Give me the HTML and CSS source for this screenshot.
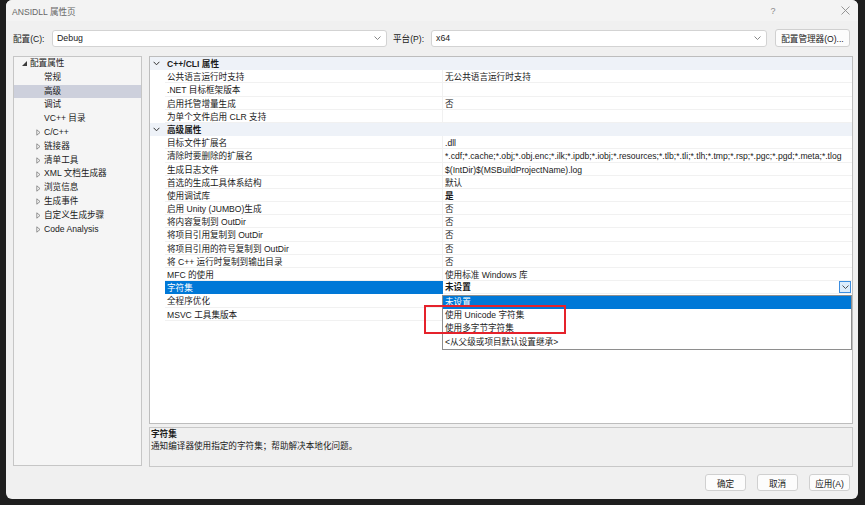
FILE: index.html
```html
<!DOCTYPE html>
<html lang="zh-CN">
<head>
<meta charset="utf-8">
<title>ANSIDLL 属性页</title>
<link rel="stylesheet" href="styles.css">
</head>
<body>
<div class="window">
  <div class="titlebar">
    <span class="title">ANSIDLL 属性页</span>
    <span class="tb-btn help">?</span>
    <span class="tb-btn close"><svg width="9" height="9" viewBox="0 0 9 9"><path d="M0.5 0.5L8.5 8.5M8.5 0.5L0.5 8.5" stroke="#8a8a8a" stroke-width="0.9" fill="none"/></svg></span>
  </div>

  <div class="configrow">
    <span class="lbl lbl-config">配置(C):</span>
    <div class="combo combo-config"><span>Debug</span><svg width="7" height="4" viewBox="0 0 7 4"><path d="M0.5 0.5L3.5 3.5L6.5 0.5" stroke="#7a7a7a" stroke-width="0.9" fill="none"/></svg></div>
    <span class="lbl lbl-platform">平台(P):</span>
    <div class="combo combo-platform"><span>x64</span><svg width="7" height="4" viewBox="0 0 7 4"><path d="M0.5 0.5L3.5 3.5L6.5 0.5" stroke="#7a7a7a" stroke-width="0.9" fill="none"/></svg></div>
    <button class="btn btn-mgr">配置管理器(O)...</button>
  </div>

  <div class="main">
    <div class="tree">
      <div class="tree-inner">
        <div class="ti l0"><span class="exp"><svg width="5" height="5" viewBox="0 0 5 5"><path d="M5 0L5 5L0 5Z" fill="#3c3c3c"/></svg></span>配置属性</div>
        <div class="ti l1"><span class="exp"></span>常规</div>
        <div class="ti l1 sel"><span class="exp"></span>高级</div>
        <div class="ti l1"><span class="exp"></span>调试</div>
        <div class="ti l1"><span class="exp"></span>VC++ 目录</div>
        <div class="ti l1"><span class="exp"><svg class="col" width="5" height="7" viewBox="0 0 5 7"><path d="M0.8 0.8L4 3.5L0.8 6.2Z" stroke="#7a7a7a" stroke-width="0.8" fill="none"/></svg></span>C/C++</div>
        <div class="ti l1"><span class="exp"><svg class="col" width="5" height="7" viewBox="0 0 5 7"><path d="M0.8 0.8L4 3.5L0.8 6.2Z" stroke="#7a7a7a" stroke-width="0.8" fill="none"/></svg></span>链接器</div>
        <div class="ti l1"><span class="exp"><svg class="col" width="5" height="7" viewBox="0 0 5 7"><path d="M0.8 0.8L4 3.5L0.8 6.2Z" stroke="#7a7a7a" stroke-width="0.8" fill="none"/></svg></span>清单工具</div>
        <div class="ti l1"><span class="exp"><svg class="col" width="5" height="7" viewBox="0 0 5 7"><path d="M0.8 0.8L4 3.5L0.8 6.2Z" stroke="#7a7a7a" stroke-width="0.8" fill="none"/></svg></span>XML 文档生成器</div>
        <div class="ti l1"><span class="exp"><svg class="col" width="5" height="7" viewBox="0 0 5 7"><path d="M0.8 0.8L4 3.5L0.8 6.2Z" stroke="#7a7a7a" stroke-width="0.8" fill="none"/></svg></span>浏览信息</div>
        <div class="ti l1"><span class="exp"><svg class="col" width="5" height="7" viewBox="0 0 5 7"><path d="M0.8 0.8L4 3.5L0.8 6.2Z" stroke="#7a7a7a" stroke-width="0.8" fill="none"/></svg></span>生成事件</div>
        <div class="ti l1"><span class="exp"><svg class="col" width="5" height="7" viewBox="0 0 5 7"><path d="M0.8 0.8L4 3.5L0.8 6.2Z" stroke="#7a7a7a" stroke-width="0.8" fill="none"/></svg></span>自定义生成步骤</div>
        <div class="ti l1"><span class="exp"><svg class="col" width="5" height="7" viewBox="0 0 5 7"><path d="M0.8 0.8L4 3.5L0.8 6.2Z" stroke="#7a7a7a" stroke-width="0.8" fill="none"/></svg></span>Code Analysis</div>
      </div>
    </div>

    <div class="right">
      <div class="grid">
        <div class="row cat"><span class="ind"><svg width="7" height="5" viewBox="0 0 7 5"><path d="M0.6 0.8L3.5 3.8L6.4 0.8" stroke="#333" stroke-width="1" fill="none"/></svg></span><span class="catname">C++/CLI 属性</span></div>
        <div class="row"><span class="ind"></span><span class="name">公共语言运行时支持</span><span class="val">无公共语言运行时支持</span></div>
        <div class="row"><span class="ind"></span><span class="name">.NET 目标框架版本</span><span class="val"></span></div>
        <div class="row"><span class="ind"></span><span class="name">启用托管增量生成</span><span class="val">否</span></div>
        <div class="row"><span class="ind"></span><span class="name">为单个文件启用 CLR 支持</span><span class="val"></span></div>
        <div class="row cat"><span class="ind"><svg width="7" height="5" viewBox="0 0 7 5"><path d="M0.6 0.8L3.5 3.8L6.4 0.8" stroke="#333" stroke-width="1" fill="none"/></svg></span><span class="catname">高级属性</span></div>
        <div class="row"><span class="ind"></span><span class="name">目标文件扩展名</span><span class="val">.dll</span></div>
        <div class="row"><span class="ind"></span><span class="name">清除时要删除的扩展名</span><span class="val">*.cdf;*.cache;*.obj;*.obj.enc;*.ilk;*.ipdb;*.iobj;*.resources;*.tlb;*.tli;*.tlh;*.tmp;*.rsp;*.pgc;*.pgd;*.meta;*.tlog</span></div>
        <div class="row"><span class="ind"></span><span class="name">生成日志文件</span><span class="val">$(IntDir)$(MSBuildProjectName).log</span></div>
        <div class="row"><span class="ind"></span><span class="name">首选的生成工具体系结构</span><span class="val">默认</span></div>
        <div class="row"><span class="ind"></span><span class="name">使用调试库</span><span class="val bold">是</span></div>
        <div class="row"><span class="ind"></span><span class="name">启用 Unity (JUMBO)生成</span><span class="val">否</span></div>
        <div class="row"><span class="ind"></span><span class="name">将内容复制到 OutDir</span><span class="val">否</span></div>
        <div class="row"><span class="ind"></span><span class="name">将项目引用复制到 OutDir</span><span class="val">否</span></div>
        <div class="row"><span class="ind"></span><span class="name">将项目引用的符号复制到 OutDir</span><span class="val">否</span></div>
        <div class="row"><span class="ind"></span><span class="name">将 C++ 运行时复制到输出目录</span><span class="val">否</span></div>
        <div class="row"><span class="ind"></span><span class="name">MFC 的使用</span><span class="val">使用标准 Windows 库</span></div>
        <div class="row selrow"><span class="ind"></span><span class="name">字符集</span><span class="val bold editval"><span>未设置</span><span class="ddbtn"><svg width="7" height="4" viewBox="0 0 7 4"><path d="M0.5 0.5L3.5 3.5L6.5 0.5" stroke="#404040" stroke-width="0.9" fill="none"/></svg></span></span></div>
        <div class="row"><span class="ind"></span><span class="name">全程序优化</span><span class="val"></span></div>
        <div class="row"><span class="ind"></span><span class="name">MSVC 工具集版本</span><span class="val"></span></div>

        <div class="ddlist">
          <div class="dditem hi">未设置</div>
          <div class="dditem">使用 Unicode 字符集</div>
          <div class="dditem">使用多字节字符集</div>
          <div class="dditem">&lt;从父级或项目默认设置继承&gt;</div>
        </div>
        <div class="redbox"></div>
      </div>
      <div class="desc">
        <div class="desc-title">字符集</div>
        <div class="desc-text">通知编译器使用指定的字符集；帮助解决本地化问题。</div>
      </div>
    </div>
  </div>

  <div class="footer">
    <button class="btn fbtn">确定</button>
    <button class="btn fbtn">取消</button>
    <button class="btn fbtn">应用(A)</button>
  </div>
</div>
</body>
</html>
```

FILE: styles.css
```css
* { box-sizing: border-box; }

body {
  margin: 0;
  width: 865px;
  height: 505px;
  overflow: hidden;
  background: #1e1e1e;
  font-family: "Liberation Sans", "Noto Sans CJK SC", sans-serif;
  font-size: 8.6px;
  color: #1a1a1a;
}

.window {
  margin-left: 6px;
  width: 852px;
  height: 499px;
  background: #f0f0f0;
  border-radius: 6px;
  display: flex;
  flex-direction: column;
  overflow: hidden;
}

/* title bar */
.titlebar {
  height: 21px;
  display: flex;
  align-items: center;
  padding-left: 6px;
  padding-right: 8px;
  color: #666;
  font-size: 8.6px;
  background: #f3f3f3;
}
.title { flex: 1; }
.tb-btn {
  width: 10px;
  display: flex;
  justify-content: center;
  align-items: center;
}
.help { color: #8a8a8a; font-size: 9px; margin-right: 62px; }

/* config row */
.configrow {
  margin-top: 8px;
  height: 18px;
  display: flex;
  align-items: center;
  padding-left: 7px;
}
.lbl { white-space: nowrap; }
.lbl-config { width: 39px; }
.lbl-platform { width: 38px; margin-left: 6px; }
.combo {
  height: 17px;
  background: #fff;
  border: 1px solid #d3d3d3;
  border-radius: 3px;
  display: flex;
  align-items: center;
  justify-content: space-between;
  padding: 0 5px 0 4px;
  font-size: 8.8px;
}
.combo-config { width: 335px; }
.combo-platform { width: 336px; }

.btn {
  font-family: inherit;
  font-size: 8.6px;
  color: #1a1a1a;
  background: #fcfcfc;
  border: 1px solid #d0d0d0;
  border-radius: 3px;
  padding: 0;
  height: 18px;
}
.btn-mgr { width: 75px; margin-left: 8px; }

/* main */
.main {
  margin-top: 9px;
  height: 411px;
  display: flex;
  gap: 7px;
  padding-left: 7px;
}

.tree {
  width: 129px;
  height: 410px;
  border: 1px solid #c6c6c6;
  background: #f5f5f5;
}
.ti {
  height: 13.8px;
  line-height: 13.8px;
  display: flex;
  align-items: center;
  white-space: nowrap;
}
.ti.l0 { padding-left: 6px; }
.ti.l1 { padding-left: 20px; }
.ti.sel { background: #cdd0dc; }
.exp {
  width: 10px;
  height: 13.8px;
  display: flex;
  align-items: center;
  padding-left: 2px;
}

.right {
  width: 704px;
  display: flex;
  flex-direction: column;
  gap: 3px;
}

/* property grid */
.grid {
  height: 368px;
  border: 1px solid #bdbdbd;
  background: #fff;
  position: relative;
  overflow: hidden;
}
.row {
  display: grid;
  grid-template-columns: 15px 278px 1fr;
  height: 13.2px;
  line-height: 12.2px;
  white-space: nowrap;
}
.ind {
  display: flex;
  align-items: center;
  padding-left: 3px;
}
.name, .val {
  padding-left: 2px;
  padding-top: 1px;
  border-bottom: 1px solid #f1f1f1;
  overflow: hidden;
}
.name { border-right: 1px solid #f1f1f1; }
.bold { font-weight: bold; }
.cat { background: #eef2f8; }
.catname {
  grid-column: 2 / 4;
  padding-left: 2px;
  padding-top: 1px;
  font-weight: bold;
}
.selrow .name {
  background: #0078d7;
  color: #fff;
  border-color: #0078d7;
}
.editval {
  display: flex;
  justify-content: space-between;
  align-items: center;
  padding-top: 0;
  padding-right: 1px;
}
.ddbtn {
  width: 12px;
  height: 12px;
  border: 1px solid #3d8ee0;
  background: #dcecfc;
  display: flex;
  align-items: center;
  justify-content: center;
}

.ddlist {
  position: absolute;
  left: 292px;
  top: 238px;
  width: 410px;
  border: 1px solid #8e8e8e;
  background: #fff;
}
.dditem {
  height: 13.2px;
  line-height: 13.2px;
  padding-left: 2px;
  white-space: nowrap;
}
.dditem.hi { background: #0078d7; color: #fff; }

.redbox {
  position: absolute;
  left: 274px;
  top: 248px;
  width: 142px;
  height: 29px;
  border: 2px solid #e5222b;
}

/* description */
.desc {
  height: 40px;
  border: 1px solid #c8c8c8;
  background: #f0f0f0;
  padding: 0 1px;
  line-height: 12px;
}
.desc-title { font-weight: bold; }

/* footer */
.footer {
  margin-top: 7px;
  display: flex;
  justify-content: flex-end;
  gap: 11px;
  padding-right: 8px;
}
.fbtn { width: 41px; height: 17px; }
```
